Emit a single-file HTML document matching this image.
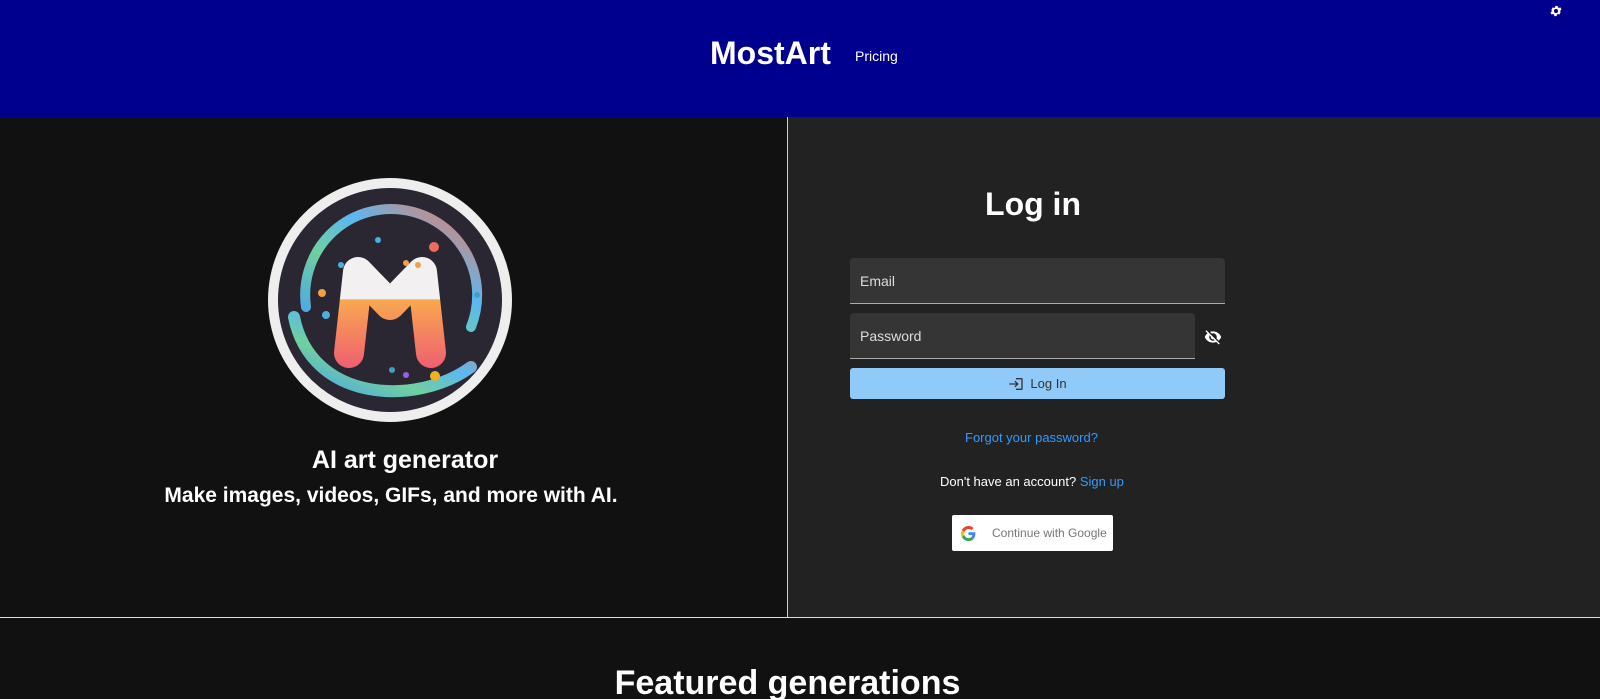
<!DOCTYPE html>
<html><head><meta charset="utf-8"><style>
*{box-sizing:border-box;margin:0;padding:0}
html,body{width:1600px;height:699px;overflow:hidden}
body{background:#111;font-family:"Liberation Sans",sans-serif;color:#fff;position:relative}
.hdr{position:absolute;left:0;top:0;width:1600px;height:117px;background:#00008f}
.brand{position:absolute;left:710px;top:35px;font-size:32px;font-weight:bold}
.pricing{position:absolute;left:855px;top:48px;font-size:14px}
.left{position:absolute;left:0;top:117px;width:787px;height:501px;background:#111}
.right{position:absolute;left:787px;top:117px;width:813px;height:501px;background:#222;border-left:1px solid #cfcfcf}
.bottom{position:absolute;left:0;top:617px;width:1600px;height:82px;background:#111;border-top:1px solid #ddd}
.t1{position:absolute;left:0;width:810px;text-align:center;top:446px;font-size:25px;font-weight:bold}
.t2{position:absolute;left:0;width:782px;text-align:center;top:484px;font-size:21px;font-weight:bold}
.login{position:absolute;left:940px;width:186px;text-align:center;top:186px;font-size:32px;font-weight:bold}
.field{position:absolute;left:850px;background:#353535;border-bottom:1px solid #aaa;border-radius:4px 4px 0 0;color:#ddd;font-size:14px;padding-left:10px}
.btn{position:absolute;left:850px;top:368px;width:375px;height:31px;background:#90caf9;border-radius:3px;color:#333;font-size:13px;display:flex;align-items:center;justify-content:center;gap:6px}
.link{color:#2e9bff}
.g{position:absolute;left:952px;top:515px;width:161px;height:36px;background:#fff;border-radius:2px;color:#777;font-size:12px}
</style></head><body>
<div class="hdr"><div class="brand">MostArt</div><div class="pricing">Pricing</div>
<svg style="position:absolute;left:1549px;top:4px" width="14" height="14" viewBox="0 0 24 24"><path fill="#fff" d="M19.4 13c.04-.33.06-.66.06-1s-.02-.67-.06-1l2.1-1.65-2-3.46-2.49 1a7.3 7.3 0 0 0-1.730-1l-.38-2.65h-4l-.38 2.65c-.63.25-1.2.6-1.73 1l-2.49-1-2 3.46L4.6 11c-.04.33-.06.66-.06 1s.02.67.06 1l-2.1 1.65 2 3.46 2.49-1c.53.4 1.1.75 1.73 1l.38 2.65h4l.38-2.65c.63-.25 1.2-.6 1.73-1l2.49 1 2-3.46zM12 15.5a3.5 3.5 0 1 1 0-7 3.5 3.5 0 0 1 0 7z"/></svg></div>
<div class="left"></div>
<svg style="position:absolute;left:266px;top:177px" width="248" height="246" viewBox="0 0 248 246">
<defs><linearGradient id="m" gradientUnits="userSpaceOnUse" x1="0" y1="80" x2="0" y2="190"><stop offset="0" stop-color="#f2f0f0"/><stop offset=".38" stop-color="#f2f0f0"/><stop offset=".39" stop-color="#f9a850"/><stop offset="1" stop-color="#f06070"/></linearGradient>
<linearGradient id="sw" x1="0" y1="1" x2="1" y2="0"><stop offset="0" stop-color="#4aa0f0"/><stop offset=".35" stop-color="#6fd0a0"/><stop offset=".6" stop-color="#5bb8f0"/><stop offset="1" stop-color="#f07a60"/></linearGradient></defs>
<circle cx="124" cy="123" r="122" fill="#eee"/>
<circle cx="124" cy="123" r="112" fill="#2a2733"/>
<path d="M40 130 A86 86 0 1 1 205 150" fill="none" stroke="url(#sw)" stroke-width="10" stroke-linecap="round"/>
<path d="M28 140 C45 225 150 230 205 190" fill="none" stroke="url(#sw)" stroke-width="12" stroke-linecap="round"/>
<path d="M83 176 L92 95 L124 128 L156 95 L165 176" fill="none" stroke="url(#m)" stroke-width="30" stroke-linecap="round" stroke-linejoin="round"/>
<circle cx="168" cy="70" r="5" fill="#f06a60"/><circle cx="56" cy="116" r="4" fill="#f5a040"/><circle cx="60" cy="138" r="4" fill="#4ab0e0"/><circle cx="169" cy="199" r="5" fill="#f0b020"/><circle cx="140" cy="198" r="3" fill="#9a60e0"/><circle cx="126" cy="193" r="3" fill="#40a0c0"/><circle cx="112" cy="63" r="3" fill="#4ab0e0"/><circle cx="152" cy="88" r="3" fill="#f5a040"/><circle cx="211" cy="118" r="3" fill="#40a0c0"/><circle cx="75" cy="88" r="3" fill="#4ab0e0"/><circle cx="140" cy="86" r="3" fill="#f5a040"/></svg>
<div class="t1">AI art generator</div>
<div class="t2">Make images, videos, GIFs, and more with AI.</div>
<div class="right"></div>
<div class="login">Log in</div>
<div class="field" style="top:258px;width:375px;height:46px;line-height:46px">Email</div>
<div class="field" style="top:313px;width:345px;height:46px;line-height:46px">Password</div>
<svg style="position:absolute;left:1204px;top:328px" width="18" height="18" viewBox="0 0 24 24"><path fill="#fff" d="M12 7c2.76 0 5 2.24 5 5 0 .65-.13 1.26-.36 1.830l2.92 2.92A11.8 11.8 0 0 0 22.99 12c-1.73-4.39-6-7.5-11-7.5-1.4 0-2.74.25-3.98.7l2.16 2.16C10.74 7.13 11.35 7 12 7zM2 4.27l2.28 2.28.46.46A11.8 11.8 0 0 0 1 12c1.73 4.39 6 7.5 11 7.5 1.55 0 3.03-.3 4.38-.84l.42.42L19.73 22 21 20.73 3.27 3zM7.53 9.8l1.55 1.55c-.05.21-.08.43-.08.65 0 1.66 1.34 3 3 3 .22 0 .44-.03.65-.08l1.55 1.55c-.67.33-1.41.53-2.2.53-2.76 0-5-2.24-5-5 0-.79.2-1.53.53-2.2z"/></svg>
<div class="btn"><svg width="16" height="16" viewBox="0 0 24 24"><path fill="#333" d="M11 7 9.6 8.4l2.6 2.6H2v2h10.2l-2.6 2.6L11 17l5-5zm9 12h-8v2h8c1.1 0 2-.9 2-2V5c0-1.1-.9-2-2-2h-8v2h8z"/></svg>Log In</div>
<div class="link" style="position:absolute;left:965px;top:430px;font-size:13px">Forgot your password?</div>
<div style="position:absolute;left:940px;top:474px;font-size:13px">Don't have an account? <span class="link">Sign up</span></div>
<div class="g"><svg style="position:absolute;left:9px;top:11px" width="15" height="15" viewBox="0 0 48 48"><path fill="#EA4335" d="M24 9.5c3.5 0 6.6 1.2 9.1 3.6l6.8-6.8C35.8 2.4 30.3 0 24 0 14.6 0 6.6 5.4 2.7 13.3l7.9 6.2C12.5 13.7 17.8 9.5 24 9.5z"/><path fill="#4285F4" d="M46.1 24.5c0-1.6-.1-3.1-.4-4.5H24v9h12.4c-.5 2.9-2.2 5.4-4.7 7.1l7.6 5.9c4.4-4.1 6.8-10.1 6.8-17.5z"/><path fill="#FBBC05" d="M10.5 28.6c-.5-1.5-.8-3-.8-4.6s.3-3.1.8-4.6l-7.9-6.1C1 16.5 0 20.1 0 24s1 7.5 2.7 10.7z"/><path fill="#34A853" d="M24 48c6.5 0 11.9-2.1 15.9-5.8l-7.6-5.9c-2.2 1.5-5 2.3-8.3 2.3-6.2 0-11.5-4.2-13.4-9.9l-7.9 6.1C6.6 42.6 14.6 48 24 48z"/></svg><span style="position:absolute;left:40px;top:11px">Continue with Google</span></div>
<div class="bottom"><div style="position:absolute;left:0;width:1575px;text-align:center;top:46px;font-size:34px;font-weight:bold">Featured generations</div></div>
</body></html>
